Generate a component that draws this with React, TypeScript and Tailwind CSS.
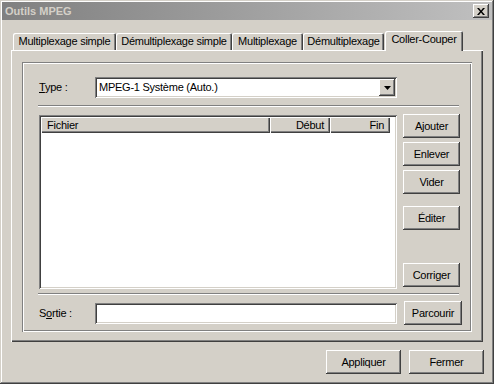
const raised =
  'shadow-[inset_-1px_-1px_0_#404040,inset_1px_1px_0_#fff,inset_-2px_-2px_0_#808080,inset_2px_2px_0_#d4d0c8]';
const sunken =
  'shadow-[inset_1px_1px_0_#808080,inset_-1px_-1px_0_#fff,inset_2px_2px_0_#404040,inset_-2px_-2px_0_#d4d0c8]';

function Button({ label, className = '' }: { label: string; className?: string }) {
  return (
    <div className={`flex items-center justify-center h-[24px] bg-[#d4d0c8] ${raised} ${className}`}>
      {label}
    </div>
  );
}

function Tab({ label, w }: { label: string; w: string }) {
  return (
    <div
      className={`${w} h-[17px] mt-[2px] flex items-center justify-center rounded-t-[2px] shadow-[inset_1px_1px_0_#fff,inset_-1px_0_0_#404040,inset_-2px_0_0_#808080]`}
    >
      {label}
    </div>
  );
}

export default function App() {
  return (
    <div className="w-[494px] h-[384px] bg-[#d4d0c8] p-[2px] flex flex-col text-[11px] leading-[13px] tracking-[-0.25px] text-black font-['Liberation_Sans',Arial,sans-serif] shadow-[inset_-1px_-1px_0_#404040,inset_1px_1px_0_#d4d0c8,inset_-2px_-2px_0_#808080,inset_2px_2px_0_#fff]">
      {/* title bar */}
      <div className="h-[18px] flex items-center justify-between pl-[3px] pr-[3px] bg-linear-to-r from-[#808080] to-[#c0c0c0]">
        <span className="font-bold text-[#d4d0c8] tracking-normal">Outils MPEG</span>
        <div className={`w-[16px] h-[14px] bg-[#d4d0c8] flex items-center justify-center ${raised}`}>
          <svg width="8" height="7" viewBox="0 0 8 7">
            <path d="M0 0h2l2 2.5L6 0h2L5 3.5 8 7H6L4 4.5 2 7H0l3-3.5z" fill="#000" />
          </svg>
        </div>
      </div>

      {/* tabs */}
      <div className="flex h-[19px] mt-[11px] ml-[9px] pl-[2px]">
        <Tab label="Multiplexage simple" w="w-[103px]" />
        <Tab label="Démultiplexage simple" w="w-[116px]" />
        <Tab label="Multiplexage" w="w-[71px]" />
        <Tab label="Démultiplexage" w="w-[81px]" />
        <div className="relative z-10 ml-[1px] w-[78px] h-[20px] pt-[2px] flex justify-center bg-[#d4d0c8] rounded-t-[2px] shadow-[inset_1px_1px_0_#fff,inset_-1px_0_0_#404040,inset_-2px_0_0_#808080]">
          Coller-Couper
        </div>
      </div>

      {/* panel */}
      <div className="ml-[9px] w-[472px] h-[292px] pt-[12px] pl-[11px] shadow-[inset_1px_1px_0_#fff,inset_-1px_-1px_0_#404040,inset_-2px_-2px_0_#808080]">
        <div className="w-[450px] h-[270px] pt-[15px] pl-[16px] shadow-[inset_1px_1px_0_#808080,inset_2px_2px_0_#fff,inset_-1px_-1px_0_#fff,inset_-2px_-2px_0_#808080]">
          {/* type row */}
          <div className="flex items-center h-[21px]">
            <span className="ml-[1px] w-[56px]">
              <span className="underline">T</span>ype :
            </span>
            <div className={`w-[302px] h-[21px] bg-white flex items-center justify-between pl-[4px] pr-[2px] ${sunken}`}>
              <span>MPEG-1 Système (Auto.)</span>
              <div className={`w-[16px] h-[17px] bg-[#d4d0c8] flex items-center justify-center ${raised}`}>
                <svg width="7" height="4" viewBox="0 0 7 4">
                  <path d="M0 0h7L3.5 4z" fill="#000" />
                </svg>
              </div>
            </div>
          </div>

          <div className="mt-[7px] w-[421px] h-[2px] border-t border-t-[#808080] border-b border-b-white" />

          {/* list + buttons */}
          <div className="flex mt-[7px] h-[175px]">
            <div className={`mt-[1px] ml-[1px] w-[358px] h-[174px] bg-white p-[2px] ${sunken}`}>
              <div className="flex h-[16px] tracking-[-0.25px]">
                <div className="w-[229px] pl-[6px] flex items-center bg-[#d4d0c8] shadow-[inset_1px_1px_0_#fff,inset_-1px_-1px_0_#404040,inset_-2px_-2px_0_#808080]">
                  Fichier
                </div>
                <div className="w-[60px] pr-[6px] flex items-center justify-end bg-[#d4d0c8] shadow-[inset_1px_1px_0_#fff,inset_-1px_-1px_0_#404040,inset_-2px_-2px_0_#808080]">
                  Début
                </div>
                <div className="w-[60px] pr-[6px] flex items-center justify-end bg-[#d4d0c8] shadow-[inset_1px_1px_0_#fff,inset_-1px_-1px_0_#404040,inset_-2px_-2px_0_#808080]">
                  Fin
                </div>
              </div>
            </div>
            <div className="ml-[6px] w-[57px] flex flex-col">
              <Button label="Ajouter" />
              <Button label="Enlever" className="mt-[4px]" />
              <Button label="Vider" className="mt-[4px]" />
              <Button label="Éditer" className="mt-[12px]" />
              <Button label="Corriger" className="mt-[33px]" />
            </div>
          </div>

          <div className="mt-[4px] w-[421px] h-[2px] border-t border-t-[#808080] border-b border-b-white" />

          {/* output row */}
          <div className="flex items-center mt-[6px] h-[24px]">
            <span className="ml-[1px] w-[56px]">
              S<span className="underline">o</span>rtie :
            </span>
            <div className={`w-[302px] h-[21px] bg-white ${sunken}`} />
            <Button label="Parcourir" className="ml-[7px] w-[58px]" />
          </div>
        </div>
      </div>

      {/* bottom buttons */}
      <div className="flex justify-end gap-[8px] mt-[8px] pr-[8px]">
        <Button label="Appliquer" className="w-[75px]" />
        <Button label="Fermer" className="w-[75px]" />
      </div>
    </div>
  );
}
